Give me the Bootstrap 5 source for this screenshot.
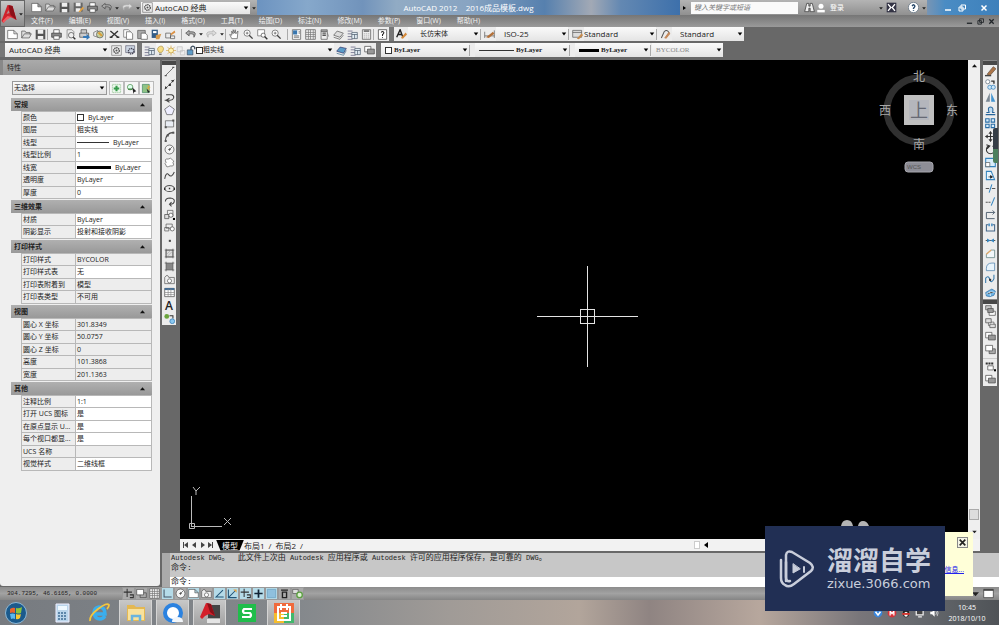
<!DOCTYPE html>
<html lang="zh-CN">
<head>
<meta charset="utf-8">
<meta name="viewport" content="width=device-width, initial-scale=1">
<title>AutoCAD 2012 - 2016成品模板.dwg</title>
<link rel="stylesheet" href="https://cdn.jsdelivr.net/npm/bootstrap@5.3.0/dist/css/bootstrap.min.css">
<style>
:root{--ui:"Open Sans","Noto Sans CJK SC",sans-serif;--chrome:#686868;--tool:#ececec}
body{font:7px/12px var(--ui);color:#222;background:#fff;padding:0 1px 2px 0}
button,select,input{font:inherit;color:inherit;border:0;background:none;padding:0;margin:0;border-radius:0}
svg{display:block;flex:none}
a{color:inherit;text-decoration:none}
.defs{position:absolute;width:0;height:0}
.work{background:var(--chrome);min-height:0}
/* square icon buttons */
.tb{width:14px;height:13px;display:flex;align-items:center;justify-content:center;flex:none}
.tb svg,.gl{width:11px;height:11px}
.tb.caret{width:7px}
.tb.caret svg{width:6px;height:6px}
.rule{width:2px;height:11px;border-left:1px solid #aaa;flex:none}
.bar{background:var(--tool);height:14px;display:flex;align-items:center;flex:none}
.grip{width:5px;height:14px;background:#777;flex:none}
.combo{display:flex;align-items:center;height:14px;background:linear-gradient(#fafafa,#e4e4e4);flex:none;gap:2px;padding-left:4px}
.combo select{flex:1;min-width:0;height:12px;appearance:none;line-height:12px;outline:0;
 background:url("data:image/svg+xml,%3Csvg xmlns='http://www.w3.org/2000/svg' viewBox='0 0 8 8'%3E%3Cpath d='M1 2h6L4 6z'/%3E%3C/svg%3E") no-repeat right 1px center/6px}
.combo select:disabled{color:#888;opacity:1}
.w-style{width:72px}.w-space{width:104px}.w-layer{width:178px}.w-color{width:88px}.w-ltype{width:94px}.w-lw{width:75px}.w-plot{width:71px}
.w-layer .gl{width:10px}
.fs8{font-size:8px}
.serif{font-family:"Liberation Serif","Noto Sans CJK SC",serif;font-weight:700}
.sw{width:7px;height:7px;border:1px solid #333;background:#fff;flex:none;display:block}
.thin{width:32px;height:1px;background:#333;flex:none}
.thick{width:34px;height:3px;background:#000;flex:none}
.combo .thick{width:20px}
.combo .thin{width:35px}
/* header */
.applogo{width:25px;background:linear-gradient(#c8c8c8,#8c8c8c);border:1px solid #666;color:#333}
.titlebar{height:15px;background:linear-gradient(#b4b4b4,#8c8c8c)}
.qat{width:232px}
.qat .combo{height:12px;padding-left:1px}
.sky{background:linear-gradient(90deg,#6c93c0,#86a8cb 12%,#7193bb 25%,#91abc4 33%,#88a4c2 50%,#5680ae 68%,#a2a9b5 79%,#6388b2 86%,#3d70ab);color:#fff;min-width:0}
.infoc{width:247px;background:linear-gradient(#b4b4b4,#909090)}
.infoc input{width:107px;height:12px;background:#fafafa;padding-left:3px;font-style:italic}
.infoc input::placeholder{color:#777;opacity:1}
.winctl{width:72px;background:linear-gradient(90deg,#7895b4,#4a8cc4 25%,#3d80bb);color:#fff}
.winctl svg{width:8px;height:8px}
.menubar{height:12px;background:linear-gradient(#767676,#9a9a9a);color:#f4f4f4;padding-left:6px}
.menubar .menu-items{gap:16px}
.row1{height:15px}
.row2{height:18px;padding-top:1px}
/* properties palette */
.palette{width:160px;background:#efefef;border-radius:0 0 3px 3px;flex:none;margin-bottom:1px}
.palette-head{height:15px;background:linear-gradient(#aaa,#999);border-left:3px solid #888;padding-left:4px;line-height:15px;margin-bottom:6px}
.selrow{padding-left:12px;margin-bottom:3px;gap:0}
.selrow .combo{width:95px;border:1px solid #999;padding-left:1px;margin-right:2px}
.sec{height:13px;background:linear-gradient(#b0b0b0,#999);padding:0 7px 0 3px;margin-left:11px;width:141px}
.sec b{font-weight:700}
.sec svg{width:5px;height:4px}
.props{border-collapse:collapse;width:131px;margin:0 0 1px 21px;table-layout:fixed;line-height:10px}
.props tr{height:12px}.props tr:nth-child(even){height:13px}
.props th,.props td{border:1px solid #b8b8b8;padding:0 0 0 1px;font-weight:400;white-space:nowrap;overflow:hidden;text-overflow:ellipsis}
.props th{width:54px;background:#ededed}
.props td{background:#fff}.props .ro{background:#ededed}
.selbtn{width:15px;height:14px;border:1px solid #bbb;display:flex;align-items:center;justify-content:center;background:#f6f6f6}
.selbtn svg{width:11px;height:11px}
/* vertical toolbars */
.rightpane{padding-left:2px}
.vtools{width:14px;flex:none}
.draw{margin-right:4px}
.modify{margin:0 2px 0 3px}
.vtools .tb{background:var(--tool)}
.vtools .txt{font-size:12px;font-weight:600}
.vgrip{height:5px;background:#484848;border-top:1px solid #888}
.vrule{height:4px;background:linear-gradient(#ececec 2px,#aaa 2px,#ececec 3px)}
.canvas{background:#000;position:relative;min-width:0;overflow:hidden}
.cross{position:absolute;left:51.6%;top:53.4%;width:101px;height:101px;margin:-50px 0 0 -50px;shape-rendering:crispEdges}
.compass{position:absolute;right:8px;top:6px;width:83px;height:108px;font-family:"Noto Sans CJK SC",sans-serif}
.ucs{position:absolute;left:8px;bottom:8px;width:44px;height:46px}
.vscroll{width:12px;background:#efefef;flex:none}
.thumb{width:10px;height:11px;background:#ddd;border:1px solid #aaa}
.hthumb{width:6px;height:8px;background:#fff;border:1px solid #ccc}
.hfill{width:34%}
.tabs{height:12px;background:#f2f2f2;font-size:8px;line-height:11px}
.tabs .tabnav{width:36px}
.tabs .on{background:#000;color:#fff;clip-path:polygon(0 0,100% 0,84% 100%,16% 100%);padding:0 6px}
.cmd{font-family:"Liberation Mono","Noto Sans CJK SC",monospace;font-size:8px;line-height:9px;background:#aaa;height:34px;margin-top:2px}
.cmd .en{font-size:7px;white-space:pre}
.cmd .log{background:#c7c7c7;height:24px;padding-left:1px}
.cmd .prompt{background:#fff;height:10px;padding-left:1px}
.cmd input{height:10px;outline:0}
.status{height:13px;background:linear-gradient(#8c8c8c,#a2a2a2 50%,#858585)}
.status .coords{width:122px;padding-left:7px;font:6px/13px "Liberation Mono",monospace;white-space:pre}
.status .tb{width:13px;height:13px;border:1px solid #999;background:#aaa}
.status .tb.on{background:#b5dbe8}
.task{height:25px;background:linear-gradient(90deg,#777b80,#84888c 30%,#a09b97 45%,#b2a59b 58%,#8f8482 65%,#b7a79d 76%,#79767a 86%,#66696e 92%,#4f5357);color:#fff}
.task .app{width:37px;height:25px;display:flex;align-items:center;justify-content:center;flex:none}
.task .app svg{width:22px;height:22px}
.task .start{width:32px;margin-right:11px}
.task .open{background:linear-gradient(#c8c8c8,#a2a2a2);border:1px solid #d4d4d4;border-width:0 1px;width:33px;margin:0 2px}
.clock{line-height:11px;text-align:center;width:40px;margin-right:12px}
.tray{gap:4px}.tray svg{width:10px;height:10px}
/* overlays */
.balloon{position:absolute;right:27px;bottom:31px;width:68px;height:64px;background:#ffffd8}
.balloon button{position:absolute;right:5px;top:5px;width:11px;height:11px;border:1px solid #888;background:#f4f4e6}
.balloon button svg{width:9px;height:9px}
.balloon a{position:absolute;right:9px;top:32px;color:#22e;text-decoration:underline;white-space:nowrap}
.mark-card{position:absolute;right:55px;bottom:16px;width:180px;height:85px;background:#212f54;color:#c9cedb;padding-left:14px;gap:12px}
.mark-card svg{width:36px;height:38px}
.mark-zh{font:700 26px/30px "Noto Sans CJK SC",sans-serif;margin:-4px 0 3px}
.mark-en{font:13px/13px "DejaVu Sans",sans-serif}
.bumps{position:absolute;right:129px;bottom:101px;width:30px;height:6px}
.edge{position:absolute;right:2px;top:128px;width:5px;height:35px;background:#353d46;border-radius:2px 0 0 2px;border-bottom:14px solid #4d7f5d}
</style>
</head>
<body class="d-flex flex-column vh-100 overflow-hidden position-relative">
<svg class="defs" aria-hidden="true"><defs>
<symbol id="new" viewBox="0 0 16 16"><path d="M1 2h9l5 5v7H1zM10 2v5h5" fill="#fff" stroke="#555"/></symbol>
<symbol id="open" viewBox="0 0 16 16"><path d="M1 13V3h5l1 2h6v3M1 13l4-6h10l-3 6z" fill="#ddd" stroke="#555"/></symbol>
<symbol id="save" viewBox="0 0 16 16"><path d="M1 1h14v14H1z" fill="#555" /><path d="M4 1h8v6H4zM4 10h8v5H4z" fill="#f0f0f0"/></symbol>
<symbol id="saveas" viewBox="0 0 16 16"><path d="M1 1h13v13H1z" fill="#666"/><path d="M4 1h7v5H4zM4 9h7v5H4z" fill="#eee"/><path d="M8 14l6-7 2 2-6 6z" fill="#e0a040"/></symbol>
<symbol id="print" viewBox="0 0 16 16"><path d="M4 6V1h8v5" fill="#fff" stroke="#444"/><path d="M1 6h14v6H1z" fill="#888" stroke="#333"/><path d="M4 10h8v5H4z" fill="#fff" stroke="#444"/></symbol>
<symbol id="preview" viewBox="0 0 16 16"><path d="M3 14V1h7l3 3v3" fill="none" stroke="#777"/><circle cx="9" cy="9" r="4" fill="#eee" stroke="#444"/><path d="M12 12l3 3" stroke="#333" stroke-width="2"/></symbol>
<symbol id="publish" viewBox="0 0 16 16"><path d="M3 6V1h8v5M1 6h13v6H1z" fill="#ccc" stroke="#444"/><path d="M6 10h5V7l5 5-5 4v-3H6z" fill="#3478b8"/></symbol>
<symbol id="globe" viewBox="0 0 16 16"><path d="M1 5l6-3v10l-6-2z" fill="#eee" stroke="#666"/><circle cx="10" cy="8" r="5" fill="#c5d0a0" stroke="#555"/><path d="M8 5l5 5" stroke="#db9e38" stroke-width="3"/></symbol>
<symbol id="cut" viewBox="0 0 16 16"><path d="M2 3l11 9M13 3L3 12" stroke="#333" stroke-width="2"/><path d="M1 12h4M11 12h4" stroke="#333" stroke-width="2"/></symbol>
<symbol id="copy" viewBox="0 0 16 16"><path d="M1 1h7l3 3v8H1z" fill="#fff" stroke="#666"/><path d="M5 4h6l3 3v8H5z" fill="#fff" stroke="#555"/></symbol>
<symbol id="paste" viewBox="0 0 16 16"><path d="M1 2h11v12H1z" fill="#aaa" stroke="#555"/><path d="M6 6h6l3 3v6H6z" fill="#fff" stroke="#555"/></symbol>
<symbol id="match" viewBox="0 0 16 16"><path d="M1 1h9v12H1z" fill="#345d86"/><path d="M3 3h5v3H3z" fill="#fff"/><path d="M7 9l8-2-3 8H7z" fill="#d69a4c"/></symbol>
<symbol id="block" viewBox="0 0 16 16"><path d="M1 6h7v7H1zM8 10h6v4H8z" fill="none" stroke="#555"/><path d="M8 7l6-5 1 3-6 4z" fill="#db9042"/></symbol>
<symbol id="undo" viewBox="0 0 16 16"><path d="M6 2L1 6l5 4V7h4q4 0 3 5 5-8-3-8H6z" fill="#aaa" stroke="#444"/></symbol>
<symbol id="redo" viewBox="0 0 16 16"><path d="M10 2l5 4-5 4V7H6q-4 0-3 5Q-2 4 6 4h4z" fill="#ddd" stroke="#aaa"/></symbol>
<symbol id="down" viewBox="0 0 16 16"><path d="M3 6h10l-5 6z" fill="#222"/></symbol>
<symbol id="hand" viewBox="0 0 16 16"><path d="M4 14L1 8l3 1V3l2 4V1l2 5 1-5 1 6 3-4-1 11z" fill="#fff" stroke="#555"/></symbol>
<symbol id="zoom" viewBox="0 0 16 16"><circle cx="6" cy="6" r="4.500" fill="#fff" stroke="#555"/><path d="M9 9l5 5" stroke="#444" stroke-width="2"/><path d="M4 6h4M6 4v4" stroke="#555"/></symbol>
<symbol id="zoomw" viewBox="0 0 16 16"><path d="M1 1h10v9H1z" fill="#fff" stroke="#666"/><circle cx="9" cy="9" r="3" fill="#fff" stroke="#444"/><path d="M11 11l4 4" stroke="#333" stroke-width="2"/></symbol>
<symbol id="props" viewBox="0 0 16 16"><path d="M2 1h12v14H2z" fill="#fff" stroke="#555"/><path d="M3 2h6v6H3z" fill="#3876ae"/><path d="M4 10h8M4 12h8M11 4h2M11 6h2" stroke="#444"/></symbol>
<symbol id="grid" viewBox="0 0 16 16"><path d="M1 1h14v14H1z" fill="#eee" stroke="#555"/><path d="M1 5h14M1 8h14M1 11h14M5 1v14M8 1v14M12 1v14" stroke="#777"/></symbol>
<symbol id="sheet" viewBox="0 0 16 16"><path d="M3 1h9v14H3z" fill="#eee" stroke="#555"/><path d="M3 3h9M5 6h5M5 9h5" stroke="#555" stroke-width="2"/><path d="M12 5l2 6" stroke="#777"/></symbol>
<symbol id="layers" viewBox="0 0 16 16"><path d="M1 9l5-6 9 3-5 6z" fill="#ddd" stroke="#555"/><path d="M1 12l9 3 5-6" fill="none" stroke="#555"/></symbol>
<symbol id="layb" viewBox="0 0 16 16"><path d="M1 9l5-6 9 2-4 7z" fill="#5a9cc8" stroke="#336"/><path d="M1 12l10 3 4-7" fill="none" stroke="#368"/></symbol>
<symbol id="laym" viewBox="0 0 16 16"><path d="M1 3h7M1 7h6M1 11h6M1 15h7" stroke="#557"/><path d="M7 5h8v9H7z" fill="#e3edf4" stroke="#456"/><path d="M7 8h8M11 8v6" stroke="#456"/></symbol>
<symbol id="calc" viewBox="0 0 16 16"><path d="M2 1h12v14H2z" fill="#eee" stroke="#555"/><path d="M4 3h8" stroke="#555" stroke-width="2"/><path d="M4 7h8M4 10h8M4 13h8" stroke="#999" stroke-dasharray="2 1"/></symbol>
<symbol id="help" viewBox="0 0 16 16"><path d="M2 1h12v14H2z" fill="#fff" stroke="#333"/><path d="M6 5q2-3 4 0 0 2-2 3v2M8 12v1" fill="none" stroke="#222" stroke-width="1.500"/></symbol>
<symbol id="style" viewBox="0 0 16 16"><path d="M1 12L6 1l4 11M3 8h6" fill="none" stroke="#222" stroke-width="2"/><path d="M7 13l7-8 2 3-6 6z" fill="#d48a3c"/></symbol>
<symbol id="dim" viewBox="0 0 16 16"><path d="M1 4v9M15 2v11M1 10h14" stroke="#555"/><path d="M3 12l10-8 2 3-8 6z" fill="#b3713a"/></symbol>
<symbol id="tabs" viewBox="0 0 16 16"><path d="M1 2h13v10H1zM1 5h13" fill="#ddd" stroke="#555"/><path d="M7 14l7-8 2 3-6 6z" fill="#c68a4c"/></symbol>
<symbol id="lead2" viewBox="0 0 16 16"><path d="M2 13L6 4q4-4 7 1l-3 6" fill="none" stroke="#555" stroke-width="1.500"/><path d="M6 13l7-9 2 3-6 7z" fill="#c68a5c"/></symbol>
<symbol id="gear" viewBox="0 0 16 16"><path d="M1 1h14v14H1z" fill="none" stroke="#777"/><circle cx="8" cy="8" r="4" fill="none" stroke="#444" stroke-width="2" stroke-dasharray="2 1"/><circle cx="8" cy="8" r="1.500" fill="#555"/></symbol>
<symbol id="gear2" viewBox="0 0 16 16"><path d="M1 1h13v10H1z" fill="#ccd5e2" stroke="#667"/><circle cx="9" cy="9" r="4" fill="none" stroke="#445" stroke-width="2" stroke-dasharray="2 1"/></symbol>
<symbol id="bulb" viewBox="0 0 16 16"><path d="M5 11Q0 5 5 2q6-3 7 3 0 3-3 6z" fill="#f6de86" stroke="#a88832"/><path d="M5 13h4v2H5z" fill="#666"/></symbol>
<symbol id="sun" viewBox="0 0 16 16"><path d="M8 0v16M0 8h16M2 2l12 12M14 2L2 14" stroke="#d3a43c"/><circle cx="8" cy="8" r="4" fill="#fff3b2" stroke="#b98a26"/></symbol>
<symbol id="frz" viewBox="0 0 16 16"><path d="M2 2h8v8H2zM7 8h7v7H7z" fill="#eee" stroke="#bbb"/></symbol>
<symbol id="lock" viewBox="0 0 16 16"><path d="M2 7h9v8H2z" fill="#5e9cc8" stroke="#345"/><path d="M8 7V3q3-4 6 0v3" fill="none" stroke="#345" stroke-width="2"/></symbol>
<symbol id="pick" viewBox="0 0 16 16"><path d="M2 2h12v12H2z" fill="#e8f6e8" stroke="#8b8" stroke-dasharray="2 1"/><path d="M8 4v8M4 8h8" stroke="#369a4b" stroke-width="3"/></symbol>
<symbol id="pick2" viewBox="0 0 16 16"><circle cx="6" cy="6" r="4" fill="#dfe" stroke="#484"/><path d="M3 9h6" stroke="#484" stroke-width="2"/><path d="M9 6l6 6-3 1-1 3z" fill="#222"/></symbol>
<symbol id="pick3" viewBox="0 0 16 16"><path d="M2 2h10v12H2z" fill="#8ec486" stroke="#486"/><path d="M9 2l5 4-3 1 3 5-6-5 3-1z" fill="#e2a83c"/><path d="M8 8l5 5-3 1z" fill="#222"/></symbol>
<symbol id="up" viewBox="0 0 8 6"><path d="M0 5h8L4 0z" fill="#111"/></symbol>
<symbol id="line" viewBox="0 0 16 16"><path d="M2 14L14 2" stroke="#444"/><path d="M1 13h3v2H1zM12 1h3v2h-3z" fill="#555"/></symbol>
<symbol id="xline" viewBox="0 0 16 16"><path d="M1 15L15 1" stroke="#444"/><path d="M1 15l1-5 3 3zM15 1l-5 1 3 3zM7 7h3v3H7z" fill="#333"/></symbol>
<symbol id="pline" viewBox="0 0 16 16"><path d="M3 4h8q4 1 3 5-1 3-5 3H1M8 9l-5 3 5 3" fill="none" stroke="#444" stroke-width="1.500"/></symbol>
<symbol id="poly" viewBox="0 0 16 16"><path d="M8 1l7 5-3 8H4L1 6z" fill="#eef" stroke="#555"/></symbol>
<symbol id="rect" viewBox="0 0 16 16"><path d="M2 4h12v9H2z" fill="#e9edf4" stroke="#555"/><path d="M1 12h3v3H1zM12 2h3v3h-3z" fill="#555"/></symbol>
<symbol id="arc" viewBox="0 0 16 16"><path d="M2 15Q2 3 14 2" fill="none" stroke="#444" stroke-width="1.500"/><path d="M1 13h3v3H1zM12 1h3v3h-3zM4 5h3v3H4z" fill="#555"/></symbol>
<symbol id="circ" viewBox="0 0 16 16"><circle cx="8" cy="8" r="6.500" fill="#f5f5f5" stroke="#444"/><path d="M8 8l4-4M6 8h4M8 6v4" stroke="#444"/></symbol>
<symbol id="cloud" viewBox="0 0 16 16"><path d="M3 8Q0 2 6 3q4-3 6 1 4 2 1 4 3 6-4 5-6 3-6-1-3-3 0-4z" fill="#fff" stroke="#555"/></symbol>
<symbol id="spline" viewBox="0 0 16 16"><path d="M1 13Q3 2 7 7t8-4" fill="none" stroke="#444" stroke-width="1.500"/></symbol>
<symbol id="ell" viewBox="0 0 16 16"><ellipse cx="8" cy="8" rx="7" ry="4.500" fill="none" stroke="#555" stroke-width="1.500"/><path d="M7 7h2v2H7zM0 7h2v3H0zM14 7h2v3h-2z" fill="#333"/></symbol>
<symbol id="earc" viewBox="0 0 16 16"><path d="M2 8q0-5 7-5 6 1 6 4 0 5-6 5M11 9l-3 3 3 3" fill="none" stroke="#444" stroke-width="1.500"/></symbol>
<symbol id="ins" viewBox="0 0 16 16"><path d="M5 2h8v9H5z" fill="#eee" stroke="#555"/><path d="M1 8h6v6H1z" fill="#ddd" stroke="#444"/><circle cx="10" cy="9" r="3" fill="#fff" stroke="#444"/><path d="M13 13h3v3h-3z"/></symbol>
<symbol id="mkb" viewBox="0 0 16 16"><path d="M3 3h9v6H3zM1 8h6v5H1z" fill="#eee" stroke="#555"/><circle cx="12" cy="10" r="3" fill="#fff" stroke="#444"/></symbol>
<symbol id="dot" viewBox="0 0 16 16"><path d="M7 7h3v3H7z" fill="#444"/></symbol>
<symbol id="hat" viewBox="0 0 16 16"><path d="M3 3h10v10H3zM1 3h14M1 13h14M3 1v14M13 1v14" fill="#ddd" stroke="#555"/><path d="M4 9l5-5M5 12l7-7" stroke="#aaa"/></symbol>
<symbol id="grad" viewBox="0 0 16 16"><path d="M3 3h10v10H3z" fill="#888"/><path d="M1 3h14M1 13h14M3 1v14M13 1v14" stroke="#555"/></symbol>
<symbol id="reg" viewBox="0 0 16 16"><path d="M1 14V5q4-6 6 0h8v9z" fill="#eee" stroke="#555"/><circle cx="8" cy="10" r="3" fill="#fff" stroke="#555"/></symbol>
<symbol id="tbl" viewBox="0 0 16 16"><path d="M1 2h14v12H1z" fill="#fff" stroke="#444"/><path d="M1 3h14" stroke="#456d94" stroke-width="3"/><path d="M1 8h14M1 11h14M6 3v11M10 3v11" stroke="#888"/></symbol>
<symbol id="addsel" viewBox="0 0 16 16"><circle cx="4" cy="5" r="3.500" fill="#6ba53c"/><path d="M8 4h5v4" fill="none" stroke="#333" stroke-width="1.500"/><circle cx="12" cy="12" r="3.500" fill="#8bc8f0" stroke="#2a77b6"/></symbol>
<symbol id="cyc" viewBox="0 0 16 16"><path d="M1 2h8v6H1z" fill="#ddd" stroke="#555"/><circle cx="11" cy="10" r="4" fill="#dff2d4" stroke="#5da044" stroke-width="2"/></symbol>
<symbol id="erase" viewBox="0 0 16 16"><path d="M3 12l9-11 4 3-9 10z" fill="#ab7448" stroke="#654"/><path d="M0 14h9" stroke="#444" stroke-width="2"/></symbol>
<symbol id="cpy" viewBox="0 0 16 16"><circle cx="4" cy="4" r="3" fill="#fff" stroke="#567"/><circle cx="7" cy="12" r="3" fill="#cde8fa" stroke="#2a77b6"/><circle cx="12" cy="12" r="3" fill="#cde8fa" stroke="#2a77b6"/><path d="M9 3h4v4" fill="none" stroke="#333" stroke-width="2"/></symbol>
<symbol id="mir" viewBox="0 0 16 16"><path d="M7 1v13H1z" fill="#7b8894"/><path d="M9 1v13h6z" fill="#4595d0"/></symbol>
<symbol id="off" viewBox="0 0 16 16"><path d="M1 14h14M2 11h4Q3 3 8 3t3 8h3" fill="#bcdaf0" stroke="#27659b" stroke-width="1.500"/></symbol>
<symbol id="arr" viewBox="0 0 16 16"><path d="M1 1h5v5H1zM9 1h5v5H9zM1 9h5v5H1zM9 9h5v5H9z" fill="#d8ecfa" stroke="#2a6ea6" stroke-width="1.500"/></symbol>
<symbol id="move" viewBox="0 0 16 16"><path d="M8 1v14M1 8h14" stroke="#333" stroke-width="1.500"/><path d="M8 0l3 4H5zM8 16l3-4H5zM0 8l4-3v6zM16 8l-4-3v6z" fill="#333"/></symbol>
<symbol id="rot" viewBox="0 0 16 16"><path d="M11 3a6 6 0 1 1-6 0M2 1l5 2-4 4" fill="none" stroke="#333" stroke-width="1.500"/></symbol>
<symbol id="scl" viewBox="0 0 16 16"><path d="M1 2h14v12H1z" fill="#d9edfb" stroke="#3584be" stroke-width="1.500"/><path d="M1 8h6v6H1z" fill="#fff" stroke="#555"/></symbol>
<symbol id="str" viewBox="0 0 16 16"><path d="M2 14V2h7l5 12z" fill="#e9f4fc" stroke="#3584be" stroke-width="1.500"/><path d="M5 10h5M8 8l3 2-3 2z" stroke="#222"/></symbol>
<symbol id="trim" viewBox="0 0 16 16"><path d="M1 8h5M10 8h5" stroke="#555" stroke-width="1.500"/><path d="M6 14l4-12" stroke="#3584be" stroke-width="1.500"/></symbol>
<symbol id="ext" viewBox="0 0 16 16"><path d="M1 9h3M5 9h3" stroke="#555" stroke-width="1.500"/><path d="M9 14l5-12" stroke="#3584be" stroke-width="1.500"/></symbol>
<symbol id="brk" viewBox="0 0 16 16"><path d="M2 14V5h12M11 2l3 3-3 3M2 14h12" fill="none" stroke="#456" stroke-width="1.300"/></symbol>
<symbol id="brk2" viewBox="0 0 16 16"><path d="M5 4H2v9h12V4h-3" fill="none" stroke="#468" stroke-width="1.500"/><path d="M5 2h2v4H5zM9 2h2v4H9z" fill="#3584be"/></symbol>
<symbol id="join" viewBox="0 0 16 16"><path d="M1 8h14" stroke="#555" stroke-width="1.500"/><path d="M3 5l5 3-5 3zM13 5L8 8l5 3z" fill="#3584be"/></symbol>
<symbol id="cham" viewBox="0 0 16 16"><path d="M2 14V9l7-6h5v11z" fill="#f2f7fa" stroke="#577"/><path d="M2 9l7-6" stroke="#e0a868" stroke-width="2"/></symbol>
<symbol id="fil" viewBox="0 0 16 16"><path d="M2 14V11q0-8 8-8h4v11z" fill="#e9f4fc" stroke="#457ba8"/></symbol>
<symbol id="blend" viewBox="0 0 16 16"><path d="M1 13V6q4-5 6 2t6-1V1" fill="none" stroke="#37a" stroke-width="1.500"/><path d="M6 7h3v3H6z" fill="#333"/></symbol>
<symbol id="expl" viewBox="0 0 16 16"><path d="M1 8l5-3 4-2 5 3-2 6-6 2-5-1z" fill="#6fb5e6" stroke="#2a6ea6"/><path d="M2 10l6-3 6 1M7 7l1 6" stroke="#fff"/></symbol>
<symbol id="ord1" viewBox="0 0 16 16"><path d="M1 1h8v6H1z" fill="#ccc" stroke="#444"/><path d="M6 9h9v6H6z" fill="#fff" stroke="#444"/><path d="M4 5h8v6H4z" fill="#999" stroke="#444"/></symbol>
<symbol id="ord2" viewBox="0 0 16 16"><path d="M5 6h8v5H5z" fill="#fff" stroke="#555"/><path d="M1 1h8v6H1zM7 9h8v5H7z" fill="#ddd" stroke="#444"/></symbol>
<symbol id="ord3" viewBox="0 0 16 16"><path d="M1 2h9v8H1z" fill="#fff" stroke="#444"/><path d="M5 6h10v7H5z" fill="#999" stroke="#444"/></symbol>
<symbol id="ord4" viewBox="0 0 16 16"><path d="M6 7h9v7H6z" fill="#aaa" stroke="#444"/><path d="M1 2h10v8H1z" fill="#fff" stroke="#444"/></symbol>
<symbol id="ord5" viewBox="0 0 16 16"><path d="M1 2h3v3H1zM5 2h3v3H5zM9 2h3v3H9z" fill="#333"/><path d="M4 7h8v6H4z" fill="#fff" stroke="#444"/><path d="M13 12h3v3h-3z"/></symbol>
<symbol id="snap" viewBox="0 0 16 16"><path d="M6 1v12M1 6h12M10 10h5v4h-5" fill="none" stroke="#333" stroke-width="1.500"/></symbol>
<symbol id="ortho" viewBox="0 0 16 16"><path d="M3 2v11h11" fill="none" stroke="#456" stroke-width="1.500"/></symbol>
<symbol id="ang" viewBox="0 0 16 16"><path d="M13 3L3 13h11" fill="none" stroke="#257" stroke-width="1.500"/></symbol>
<symbol id="duc" viewBox="0 0 16 16"><path d="M2 2v12h12M2 14L12 4" fill="none" stroke="#257" stroke-width="1.500"/><path d="M9 2h5v5z" fill="#e0a040"/></symbol>
<symbol id="plus" viewBox="0 0 16 16"><path d="M8 2v12M2 8h12" stroke="#123" stroke-width="2.500"/></symbol>
<symbol id="x" viewBox="0 0 16 16"><path d="M3 3l10 10M13 3L3 13" stroke="currentColor" stroke-width="3"/></symbol>
<symbol id="min" viewBox="0 0 16 16"><path d="M2 12h12" stroke="currentColor" stroke-width="3"/></symbol>
<symbol id="res" viewBox="0 0 16 16"><path d="M6 2h9v8H6z" fill="none" stroke="currentColor" stroke-width="2"/><path d="M2 6h8v8H2z" fill="none" stroke="currentColor" stroke-width="2"/></symbol>
<symbol id="bino" viewBox="0 0 16 16"><path d="M4 2h3v4h2V2h3l3 12H9V9H7v5H1z" fill="#eee" stroke="#333"/></symbol>
<symbol id="user" viewBox="0 0 16 16"><circle cx="8" cy="5" r="4" fill="#fff"/><path d="M2 11h12v4H2z" fill="#fff"/></symbol>
</defs></svg>

<header class="d-flex flex-shrink-0">
  <button class="applogo d-flex align-items-center" aria-label="应用程序菜单">
    <svg width="17" height="24" viewBox="0 0 16 24"><path d="M0 19L6 3l5 1 4 14-6-3-4 2-3 4z" fill="#d0202a"/><path d="M7 3l4 1 4 14-6-5z" fill="#8c1018"/><path d="M1 19l5-5 4 1-5 3-3 3z" fill="#f05a60"/><path d="M5 12l2-4 1 3z" fill="#b88a8c"/></svg>
    <svg width="6" height="6"><use href="#down"/></svg>
  </button>
  <div class="flex-grow-1 overflow-hidden">
    <div class="titlebar d-flex">
      <div class="qat d-flex align-items-center ps-1 flex-shrink-0">
        <button class="tb" aria-label="新建"><svg><use href="#new"/></svg></button><button class="tb" aria-label="打开"><svg><use href="#open"/></svg></button><button class="tb" aria-label="保存"><svg><use href="#save"/></svg></button><button class="tb" aria-label="另存为"><svg><use href="#saveas"/></svg></button><button class="tb" aria-label="打印"><svg><use href="#print"/></svg></button><button class="tb" aria-label="放弃"><svg><use href="#undo"/></svg></button><button class="tb caret" aria-label="更多"><svg><use href="#down"/></svg></button><button class="tb" aria-label="重做"><svg><use href="#redo"/></svg></button><button class="tb caret" aria-label="更多"><svg><use href="#down"/></svg></button>
        <div class="combo flex-grow-1 fs8"><svg class="gl"><use href="#gear"/></svg><select aria-label="工作空间"><option>AutoCAD 经典</option></select></div>
        <button class="tb caret" aria-label="自定义"><svg><use href="#down"/></svg></button>
      </div>
      <div class="sky flex-grow-1 d-flex justify-content-center align-items-center fs8"><span class="text-nowrap">AutoCAD 2012 &nbsp;&nbsp; 2016成品模板.dwg</span></div>
      <div class="infoc d-flex align-items-center flex-shrink-0">
        <button class="tb caret" aria-label="展开"><svg viewBox="0 0 6 6"><path d="M2 1v4l3-2z"/></svg></button>
        <input type="text" class="ms-1" placeholder="键入关键字或短语" aria-label="搜索">
        <button class="tb ms-1" aria-label="查找"><svg><use href="#bino"/></svg></button>
        <button class="d-flex align-items-center gap-1 text-white"><svg width="10" height="10"><use href="#user"/></svg>登录</button>
        <button class="tb caret ms-auto" aria-label="登录选项"><svg><use href="#down"/></svg></button>
        <button class="tb" aria-label="交换"><svg viewBox="0 0 16 16"><path d="M1 1h14v14H1z" fill="#334"/><path d="M3 3l4 5-4 5M13 3L9 8l4 5" stroke="#fff" stroke-width="2" fill="none"/></svg></button>
        <button class="tb ms-2" aria-label="帮助"><svg viewBox="0 0 16 16"><circle cx="8" cy="8" r="7.500" fill="#fff" stroke="#567"/><path d="M6 6q2-4 4 0 0 1-2 3v1M8 12v1" fill="none" stroke="#246" stroke-width="2"/></svg></button>
        <button class="tb caret" aria-label="帮助选项"><svg><use href="#down"/></svg></button>
      </div>
      <div class="winctl d-flex align-items-center justify-content-end pe-2 flex-shrink-0"><button class="tb" aria-label="最小化"><svg><use href="#min"/></svg></button><button class="tb" aria-label="还原"><svg><use href="#res"/></svg></button><button class="tb ms-2" aria-label="关闭"><svg><use href="#x"/></svg></button></div>
    </div>
    <nav class="menubar d-flex align-items-center">
      <div class="menu-items d-flex text-nowrap"><a href="#">文件(F)</a><a href="#">编辑(E)</a><a href="#">视图(V)</a><a href="#">插入(I)</a><a href="#">格式(O)</a><a href="#">工具(T)</a><a href="#">绘图(D)</a><a href="#">标注(N)</a><a href="#">修改(M)</a><a href="#">参数(P)</a><a href="#">窗口(W)</a><a href="#">帮助(H)</a></div>
      <div class="ms-auto d-flex gap-1 text-dark pe-1"><button aria-label="最小化图形"><svg width="7" height="7"><use href="#min"/></svg></button><button aria-label="还原图形"><svg width="7" height="7"><use href="#res"/></svg></button><button aria-label="关闭图形"><svg width="7" height="7"><use href="#x"/></svg></button></div>
    </nav>
  </div>
</header>

<main class="work flex-grow-1 d-flex flex-column">
  <div class="row1 d-flex flex-shrink-0">
    <span class="grip"></span>
    <div class="bar">
      <button class="tb" aria-label="新建"><svg><use href="#new"/></svg></button><button class="tb" aria-label="打开"><svg><use href="#open"/></svg></button><button class="tb" aria-label="保存"><svg><use href="#save"/></svg></button><span class="rule"></span>
      <button class="tb" aria-label="打印"><svg><use href="#print"/></svg></button><button class="tb" aria-label="预览"><svg><use href="#preview"/></svg></button><button class="tb" aria-label="发布"><svg><use href="#publish"/></svg></button><button class="tb" aria-label="三维打印"><svg><use href="#globe"/></svg></button><span class="rule"></span>
      <button class="tb" aria-label="剪切"><svg><use href="#cut"/></svg></button><button class="tb" aria-label="复制"><svg><use href="#copy"/></svg></button><button class="tb" aria-label="粘贴"><svg><use href="#paste"/></svg></button><button class="tb" aria-label="特性匹配"><svg><use href="#match"/></svg></button><button class="tb" aria-label="块编辑器"><svg><use href="#block"/></svg></button><span class="rule ms-1"></span>
      <button class="tb" aria-label="放弃"><svg><use href="#undo"/></svg></button><button class="tb caret" aria-label="更多"><svg><use href="#down"/></svg></button><button class="tb" aria-label="重做"><svg><use href="#redo"/></svg></button><button class="tb caret" aria-label="更多"><svg><use href="#down"/></svg></button><span class="rule"></span>
      <button class="tb" aria-label="平移"><svg><use href="#hand"/></svg></button><button class="tb" aria-label="缩放"><svg><use href="#zoom"/></svg></button><button class="tb" aria-label="窗口缩放"><svg><use href="#zoomw"/></svg></button><button class="tb" aria-label="缩放上一个"><svg><use href="#zoom"/></svg></button><span class="rule ms-1"></span>
      <button class="tb" aria-label="特性"><svg><use href="#props"/></svg></button><button class="tb" aria-label="设计中心"><svg><use href="#grid"/></svg></button><button class="tb" aria-label="工具选项板"><svg><use href="#sheet"/></svg></button><button class="tb" aria-label="图纸集"><svg><use href="#layers"/></svg></button><button class="tb" aria-label="标记集"><svg><use href="#laym"/></svg></button><button class="tb" aria-label="计算器"><svg><use href="#calc"/></svg></button><span class="rule"></span>
      <button class="tb" aria-label="帮助"><svg><use href="#help"/></svg></button>
    </div>
    <span class="grip"></span>
    <div class="bar">
      <button class="tb" aria-label="文字样式"><svg><use href="#style"/></svg></button><div class="combo w-style"><select class="ps-2" aria-label="文字样式"><option>长仿宋体</option></select></div><span class="rule"></span>
      <button class="tb" aria-label="标注样式"><svg><use href="#dim"/></svg></button><div class="combo w-style fs8"><select class="ps-1" aria-label="标注样式"><option>ISO-25</option></select></div><span class="rule"></span>
      <button class="tb" aria-label="表格样式"><svg><use href="#tabs"/></svg></button><div class="combo w-style fs8 ps-0"><select aria-label="表格样式"><option>Standard</option></select></div><span class="rule"></span>
      <button class="tb" aria-label="引线样式"><svg><use href="#lead2"/></svg></button><div class="combo w-style fs8"><select class="ps-1" aria-label="引线样式"><option>Standard</option></select></div>
    </div>
  </div>
  <div class="row2 d-flex flex-shrink-0">
    <span class="grip"></span>
    <div class="bar">
      <div class="combo w-space fs8"><select aria-label="工作空间"><option>AutoCAD 经典</option></select></div>
      <button class="tb" aria-label="工作空间设置"><svg><use href="#gear"/></svg></button><button class="tb" aria-label="我的工作空间"><svg><use href="#gear2"/></svg></button>
    </div>
    <span class="grip"></span>
    <div class="bar">
      <button class="tb" aria-label="图层特性"><svg><use href="#laym"/></svg></button>
      <div class="combo w-layer ps-0 gap-0"><svg class="gl"><use href="#bulb"/></svg><svg class="gl"><use href="#sun"/></svg><svg class="gl"><use href="#frz"/></svg><svg class="gl"><use href="#lock"/></svg><span class="sw"></span><select aria-label="图层"><option>粗实线</option></select></div>
      <button class="tb" aria-label="置为当前"><svg><use href="#layb"/></svg></button><button class="tb" aria-label="上一个图层"><svg><use href="#laym"/></svg></button><button class="tb" aria-label="图层状态"><svg><use href="#ord3"/></svg></button>
    </div>
    <span class="grip"></span>
    <div class="bar serif">
      <div class="combo w-color"><span class="sw"></span><select aria-label="颜色"><option>ByLayer</option></select></div><span class="rule me-1"></span>
      <div class="combo w-ltype"><span class="thin"></span><select aria-label="线型"><option>ByLayer</option></select></div><span class="rule me-1"></span>
      <div class="combo w-lw"><span class="thick"></span><select aria-label="线宽"><option>ByLayer</option></select></div><span class="rule"></span>
      <div class="combo w-plot fw-normal"><select aria-label="打印样式" disabled><option>BYCOLOR</option></select></div>
    </div>
  </div>

  <div class="flex-grow-1 d-flex overflow-hidden">
    <aside class="palette">
      <div class="palette-head">特性</div>
      <div class="selrow d-flex align-items-center">
        <div class="combo"><select aria-label="选择对象"><option>无选择</option></select></div>
        <button class="selbtn" aria-label="切换 PICKADD"><svg><use href="#pick"/></svg></button><button class="selbtn" aria-label="选择"><svg><use href="#pick2"/></svg></button><button class="selbtn" aria-label="快速选择"><svg><use href="#pick3"/></svg></button>
      </div>
      <button class="sec d-flex justify-content-between align-items-center"><b>常规</b><svg><use href="#up"/></svg></button>
      <table class="props">
        <tr><th>颜色</th><td><span class="d-flex align-items-center gap-1"><i class="sw"></i>ByLayer</span></td></tr>
        <tr><th>图层</th><td>粗实线</td></tr>
        <tr><th>线型</th><td><span class="d-flex align-items-center gap-1"><i class="thin"></i>ByLayer</span></td></tr>
        <tr><th>线型比例</th><td>1</td></tr>
        <tr><th>线宽</th><td><span class="d-flex align-items-center gap-1"><i class="thick"></i>ByLayer</span></td></tr>
        <tr><th>透明度</th><td>ByLayer</td></tr>
        <tr><th>厚度</th><td>0</td></tr>
      </table>
      <button class="sec d-flex justify-content-between align-items-center"><b>三维效果</b><svg><use href="#up"/></svg></button>
      <table class="props">
        <tr><th>材质</th><td>ByLayer</td></tr>
        <tr><th>阴影显示</th><td>投射和接收阴影</td></tr>
      </table>
      <button class="sec d-flex justify-content-between align-items-center"><b>打印样式</b><svg><use href="#up"/></svg></button>
      <table class="props">
        <tr><th>打印样式</th><td class="ro">BYCOLOR</td></tr>
        <tr><th>打印样式表</th><td>无</td></tr>
        <tr><th>打印表附着到</th><td class="ro">模型</td></tr>
        <tr><th>打印表类型</th><td class="ro">不可用</td></tr>
      </table>
      <button class="sec d-flex justify-content-between align-items-center"><b>视图</b><svg><use href="#up"/></svg></button>
      <table class="props">
        <tr><th>圆心 X 坐标</th><td class="ro">301.8349</td></tr>
        <tr><th>圆心 Y 坐标</th><td class="ro">50.0757</td></tr>
        <tr><th>圆心 Z 坐标</th><td class="ro">0</td></tr>
        <tr><th>高度</th><td class="ro">101.3868</td></tr>
        <tr><th>宽度</th><td class="ro">201.1363</td></tr>
      </table>
      <button class="sec d-flex justify-content-between align-items-center"><b>其他</b><svg><use href="#up"/></svg></button>
      <table class="props">
        <tr><th>注释比例</th><td>1:1</td></tr>
        <tr><th>打开 UCS 图标</th><td>是</td></tr>
        <tr><th>在原点显示 U...</th><td>是</td></tr>
        <tr><th>每个视口都显...</th><td>是</td></tr>
        <tr><th>UCS 名称</th><td class="ro"></td></tr>
        <tr><th>视觉样式</th><td>二维线框</td></tr>
      </table>
    </aside>

    <div class="rightpane flex-grow-1 d-flex flex-column overflow-hidden">
      <div class="flex-grow-1 d-flex overflow-hidden">
        <div class="vtools draw">
          <div class="vgrip"></div>
          <button class="tb" aria-label="直线"><svg><use href="#line"/></svg></button><button class="tb" aria-label="构造线"><svg><use href="#xline"/></svg></button><button class="tb" aria-label="多段线"><svg><use href="#pline"/></svg></button><button class="tb" aria-label="多边形"><svg><use href="#poly"/></svg></button><button class="tb" aria-label="矩形"><svg><use href="#rect"/></svg></button><button class="tb" aria-label="圆弧"><svg><use href="#arc"/></svg></button><button class="tb" aria-label="圆"><svg><use href="#circ"/></svg></button><button class="tb" aria-label="修订云线"><svg><use href="#cloud"/></svg></button><button class="tb" aria-label="样条曲线"><svg><use href="#spline"/></svg></button><button class="tb" aria-label="椭圆"><svg><use href="#ell"/></svg></button><button class="tb" aria-label="椭圆弧"><svg><use href="#earc"/></svg></button><button class="tb" aria-label="插入块"><svg><use href="#ins"/></svg></button><button class="tb" aria-label="创建块"><svg><use href="#mkb"/></svg></button><button class="tb" aria-label="点"><svg><use href="#dot"/></svg></button><button class="tb" aria-label="图案填充"><svg><use href="#hat"/></svg></button><button class="tb" aria-label="渐变色"><svg><use href="#grad"/></svg></button><button class="tb" aria-label="面域"><svg><use href="#reg"/></svg></button><button class="tb" aria-label="表格"><svg><use href="#tbl"/></svg></button><button class="tb txt">A</button><button class="tb" aria-label="添加选定对象"><svg><use href="#addsel"/></svg></button>
        </div>
        <div class="flex-grow-1 d-flex flex-column overflow-hidden">
          <div class="flex-grow-1 d-flex overflow-hidden">
            <div class="canvas flex-grow-1">
              <svg class="compass" viewBox="0 -3 83 108">
                <circle cx="42" cy="41" r="32" fill="none" stroke="#303030" stroke-width="7"/>
                <path d="M27 26h30v30H27z" fill="#bfbfbf"/><path d="M32 31h20v20H32z" fill="#b4b6bc"/>
                <g fill="#a8a8a8" font-size="12" text-anchor="middle"><text x="42" y="12">北</text><text x="42" y="80">南</text><text x="8" y="46">西</text><text x="75" y="46">东</text></g>
                <text x="42" y="48" font-size="18" text-anchor="middle" fill="#666974">上</text>
                <rect x="28" y="93" width="28" height="10" rx="3" fill="#8d8d96" stroke="#a7a7ae"/><text x="30" y="100" font-size="6" fill="#555" font-family="Liberation Sans">WCS</text>
              </svg>
              <svg class="cross" viewBox="0 0 101 101" fill="none" stroke="#e4e4e4"><path d="M50.500 0v101M0 50.500h101M43.500 43.500h14v14h-14z"/></svg>
              <svg class="ucs" viewBox="0 0 44 46" fill="none" stroke="#bbb"><path d="M3.500 11v31M3.500 41.500H34M1.500 38.500h5v5h-5zM5 2l3 4v4M12 2L8 6M36 33l7 7M43 33l-7 7"/></svg>
            </div>
            <div class="vscroll d-flex flex-column align-items-center justify-content-between py-1">
              <svg width="5" height="4"><use href="#up"/></svg>
              <div class="mt-auto mb-2 thumb"></div>
              <svg width="7" height="7"><use href="#down"/></svg>
            </div>
          </div>
          <div class="tabs d-flex align-items-center overflow-hidden flex-shrink-0">
            <svg class="tabnav" height="8" viewBox="0 0 36 8" fill="#444"><path d="M3 1h1v6H3zM8 1v6L4 4zM16 1v6l-4-3zM21 1v6l4-3zM28 1v6l4-3zM32 1h1v6h-1z"/></svg>
            <a class="on" href="#">模型</a><a href="#">布局1</a><span class="px-1">/</span><a href="#">布局2</a><span class="ps-1">/</span>
            <div class="flex-grow-1 d-flex justify-content-end align-items-center gap-1"><span class="hthumb"></span><svg width="4" height="6" viewBox="0 0 4 6"><path d="M4 0v6L0 3z"/></svg></div>
            <span class="hfill"></span>
          </div>
        </div>
        <div class="vtools modify">
          <div class="vgrip"></div>
          <button class="tb" aria-label="删除"><svg><use href="#erase"/></svg></button><button class="tb" aria-label="复制"><svg><use href="#cpy"/></svg></button><button class="tb" aria-label="镜像"><svg><use href="#mir"/></svg></button><button class="tb" aria-label="偏移"><svg><use href="#off"/></svg></button><button class="tb" aria-label="阵列"><svg><use href="#arr"/></svg></button><button class="tb" aria-label="移动"><svg><use href="#move"/></svg></button><button class="tb" aria-label="旋转"><svg><use href="#rot"/></svg></button><button class="tb" aria-label="缩放"><svg><use href="#scl"/></svg></button><button class="tb" aria-label="拉伸"><svg><use href="#str"/></svg></button><button class="tb" aria-label="修剪"><svg><use href="#trim"/></svg></button><button class="tb" aria-label="延伸"><svg><use href="#ext"/></svg></button><button class="tb" aria-label="打断于点"><svg><use href="#brk"/></svg></button><button class="tb" aria-label="打断"><svg><use href="#brk2"/></svg></button><button class="tb" aria-label="合并"><svg><use href="#join"/></svg></button><button class="tb" aria-label="倒角"><svg><use href="#cham"/></svg></button><button class="tb" aria-label="圆角"><svg><use href="#fil"/></svg></button><button class="tb" aria-label="光顺曲线"><svg><use href="#blend"/></svg></button><button class="tb" aria-label="分解"><svg><use href="#expl"/></svg></button>
          <div class="vgrip"></div>
          <button class="tb" aria-label="前置"><svg><use href="#ord1"/></svg></button><button class="tb" aria-label="后置"><svg><use href="#ord2"/></svg></button><button class="tb" aria-label="置于对象之上"><svg><use href="#ord3"/></svg></button><button class="tb" aria-label="置于对象之下"><svg><use href="#ord4"/></svg></button>
          <div class="vrule"></div>
          <button class="tb" aria-label="文字前置"><svg><use href="#ord5"/></svg></button><button class="tb" aria-label="图案填充后置"><svg><use href="#ord3"/></svg></button>
        </div>
      </div>
      <section class="cmd d-flex flex-shrink-0">
        <div class="flex-grow-1 ms-2">
          <div class="log"><div class="text-nowrap"><span class="en">Autodesk DWG</span>。<span class="en">  </span>此文件上次由<span class="en"> Autodesk </span>应用程序或<span class="en"> Autodesk </span>许可的应用程序保存，是可靠的<span class="en"> DWG</span>。</div><div>命令:</div></div>
          <div class="prompt d-flex"><label for="cmdline" class="text-nowrap">命令:</label><input id="cmdline" type="text" class="flex-grow-1"></div>
        </div>
      </section>
    </div>
  </div>
</main>

<div class="status d-flex flex-shrink-0 align-items-center">
  <span class="coords">304.7295, 46.6165, 0.0000</span>
  <button class="tb" aria-label="推断约束"><svg><use href="#snap"/></svg></button><button class="tb" aria-label="捕捉"><svg><use href="#ord4"/></svg></button><button class="tb" aria-label="栅格"><svg><use href="#grid"/></svg></button><button class="tb on" aria-label="正交"><svg><use href="#ortho"/></svg></button><button class="tb" aria-label="极轴"><svg><use href="#circ"/></svg></button><button class="tb on" aria-label="对象捕捉"><svg><use href="#new"/></svg></button><button class="tb" aria-label="三维对象捕捉"><svg><use href="#reg"/></svg></button><button class="tb on" aria-label="对象追踪"><svg><use href="#ang"/></svg></button><button class="tb on" aria-label="动态 UCS"><svg><use href="#duc"/></svg></button><button class="tb on" aria-label="动态输入"><svg><use href="#snap"/></svg></button><button class="tb on" aria-label="线宽"><svg><use href="#plus"/></svg></button><button class="tb on" aria-label="透明度"><svg viewBox="0 0 16 16"><path d="M2 2h12v12H2z" fill="#8fc0dd" stroke="#6aa0c2"/></svg></button><button class="tb" aria-label="快捷特性"><svg viewBox="0 0 16 16"><path d="M3 3h10M5 6h6v8H5z" fill="none" stroke="#222" stroke-width="2"/></svg></button><button class="tb" aria-label="选择循环"><svg><use href="#cyc"/></svg></button>
  <button class="tb ms-auto border-0 bg-transparent" aria-label="状态栏菜单"><svg><use href="#down"/></svg></button><button class="tb border-0 bg-transparent me-1" aria-label="全屏显示"><svg viewBox="0 0 16 16"><path d="M1 2h14v12H1z" fill="#fff" stroke="#333"/><path d="M1 3h14" stroke="#333" stroke-width="2"/></svg></button>
</div>

<footer class="task d-flex align-items-center flex-shrink-0">
  <button class="app start" aria-label="开始"><svg viewBox="0 0 22 22"><circle cx="11" cy="11" r="10.500" fill="#1b5a8c" stroke="#8db8d6"/><path d="M5 7q3-2 5-1v5q-3-1-5 0z" fill="#e8642c"/><path d="M11 6q3 1 6-1l-1 6q-3 1-5 0z" fill="#8cc43c"/><path d="M5 12q3-1 5 0v5q-2-1-4 0z" fill="#5cb8ee"/><path d="M11 12q3 1 5 0l-1 4q-2 2-4 1z" fill="#fbc830"/></svg></button>
  <button class="app" aria-label="计算器"><svg viewBox="0 0 22 22"><path d="M5 2h13v18H5z" fill="#b9d4ea" stroke="#eef"/><path d="M7 4h9v4H7z" fill="#eef8ff"/><path d="M7 11h9M7 14h9M7 17h9" stroke="#5d86aa" stroke-width="2" stroke-dasharray="2 1"/></svg></button>
  <button class="app" aria-label="Internet Explorer"><svg viewBox="0 0 22 22"><path d="M6 12h11q0-7-6-7-5 1-5 6 1 6 6 6 3 0 5-3" fill="none" stroke="#3aaeee" stroke-width="3.500"/><path d="M2 19Q1 14 10 7t11-4q0 2-2 4" fill="none" stroke="#f4c63c" stroke-width="1.800"/></svg></button>
  <button class="app open" aria-label="资源管理器"><svg viewBox="0 0 22 22"><path d="M2 3h7l2 2h9v14H2z" fill="#e4b852"/><path d="M3 7h16v11H3z" fill="#f9e29c"/><path d="M7 19v-5h8v5" fill="none" stroke="#6ab4de" stroke-width="2.500"/></svg></button>
  <button class="app open" aria-label="浏览器"><svg viewBox="0 0 22 22"><circle cx="11" cy="11" r="8" fill="#fff" stroke="#2b82e0" stroke-width="4"/><path d="M10 20q0-5 5-5 6 0 6 5z" fill="#f2f6fa"/></svg></button>
  <button class="app open" aria-label="AutoCAD"><svg viewBox="0 0 22 22"><path d="M9 3h12v13H9z" fill="#444"/><path d="M1 15L7 1l5 1 4 12-6-2-4 2-3 3z" fill="#d4202a"/><path d="M8 1l4 1 4 12-5-4z" fill="#8c1018"/><path d="M8 17h13v4H8z" fill="#e4e4e4"/></svg></button>
  <button class="app" aria-label="WPS 表格"><svg viewBox="0 0 22 22"><path d="M2 2h18v18H2z" fill="#20bd4b"/><path d="M16 7H8q-2 2 0 4h6q2 2 0 4H6" fill="none" stroke="#fff" stroke-width="2.200"/></svg></button>
  <button class="app open" aria-label="便签"><svg viewBox="0 0 22 22"><path d="M1 1h20v10H1z" fill="#f06a3c"/><path d="M1 11h10v10H1z" fill="#f6bd2c"/><path d="M11 11h10v10H11z" fill="#41b86c"/><path d="M5 5h12v13H5z" fill="none" stroke="#fff" stroke-width="2"/><path d="M8 2v6M14 2v6M8 11h6M8 14h6" stroke="#fff" stroke-width="2"/></svg></button>
  <div class="tray d-flex align-items-center ms-auto me-2">
    <svg viewBox="0 0 16 16"><circle cx="8" cy="8" r="7" fill="#3a86dc"/><path d="M4 6l4 5 4-5" stroke="#fff" stroke-width="2.500" fill="none"/></svg>
    <svg viewBox="0 0 16 16"><circle cx="8" cy="8" r="7" fill="#d83238"/><path d="M5 12V5l3 4 3-4v7" stroke="#fff" stroke-width="2" fill="none"/></svg>
    <svg viewBox="0 0 16 16"><ellipse cx="8" cy="8" rx="5" ry="7" fill="#222"/><ellipse cx="8" cy="10" rx="3" ry="4" fill="#fff"/><path d="M2 8h12v3H2z" fill="#d4352e"/></svg>
    <svg viewBox="0 0 16 16"><path d="M2 3h11v8H2zM5 14h6" fill="#444" stroke="#eee" stroke-width="2"/></svg>
    <svg viewBox="0 0 16 16"><path d="M2 6h3l4-4v12l-4-4H2z" fill="#fff"/><path d="M11 5q2 3 0 6M13 3q3 5 0 10" fill="none" stroke="#fff"/></svg>
  </div>
  <div class="clock">10:45<br>2018/10/10</div>
</footer>

<svg class="bumps" viewBox="0 0 30 6" fill="#b4b4b4"><path d="M0 6q1-6 6-6t6 6zM17 6q1-5 5-5t6 5z"/></svg>
<aside class="balloon"><button aria-label="关闭"><svg><use href="#x"/></svg></button><a href="#">信息...</a></aside>
<aside class="mark-card d-flex align-items-center">
  <svg viewBox="0 0 36 38" fill="none" stroke="#c9cedb" stroke-width="2.500" stroke-linecap="round"><path d="M7 31V5q1-5 6-3l18 11q5 4 1 8L15 34q-5 4-9 1-4-2-4-7V10"/><path d="M7 12v15q0 5 4 4" /><path d="M14 14v9l7-4z" fill="#c9cedb" stroke-width="1"/><path d="M25 17v5" stroke-width="2"/></svg>
  <div><div class="mark-zh">溜溜自学</div><div class="mark-en">zixue.3066.com</div></div>
</aside>
<div class="edge"></div>
</body>
</html>
